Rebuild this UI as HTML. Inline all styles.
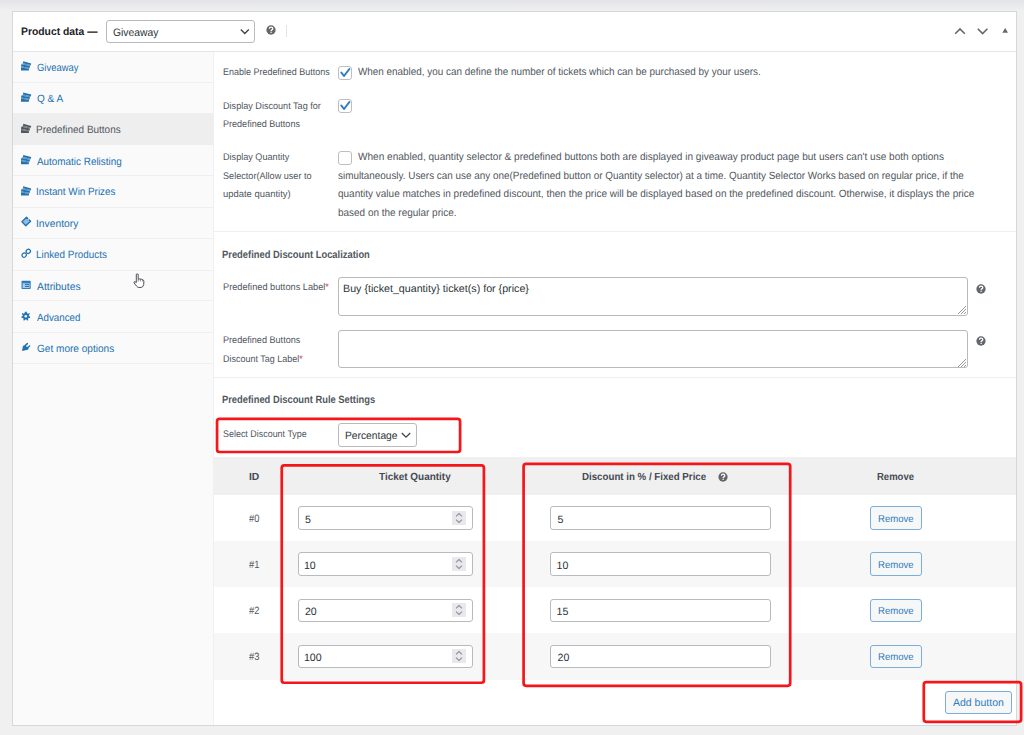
<!DOCTYPE html>
<html><head><meta charset="utf-8">
<style>
*{box-sizing:border-box;margin:0;padding:0}
html,body{width:1024px;height:735px;overflow:hidden;background:#f0f0f1;font-family:"Liberation Sans",sans-serif}
.a{position:absolute}
.t{position:absolute;white-space:nowrap;line-height:normal;transform-origin:0 0;text-rendering:geometricPrecision;font-family:"Liberation Sans",sans-serif}
.topgrad{left:0;top:0;width:1024px;height:11px;background:linear-gradient(#e3e4e6,#f0f0f1)}
.panel{left:12px;top:11px;width:1005px;height:715px;background:#fff;border:1px solid #d6d7d9}
.hsep{left:13px;top:51px;width:1003px;height:1px;background:#e6e6e6}
.sidebar{left:13px;top:52px;width:200px;height:673px;background:#fafafa}
.sbline{left:213px;top:52px;width:1px;height:673px;background:#f0f0f0}
.ssep{left:13px;width:200px;height:1px;background:#efefef}
.sactive{left:13px;top:113px;width:200px;height:32px;background:#eeeeee}
.box{border:1px solid #b8babd;border-radius:3px;background:#fff}
.cb{width:14px;height:14px;border:1px solid #bcbec1;border-radius:3px;background:#fff}
.btn{border:1px solid #7cadd9;border-radius:3px;background:#f6f7f7}
.csep{left:214px;width:802px;height:1px;background:#efefef}
.help{width:9.4px;height:9.4px;border-radius:50%;background:#63676c;color:#fff;font-weight:700;font-size:7.5px;line-height:9.4px;text-align:center}
</style></head><body>
<div class="a topgrad"></div>
<div class="a panel"></div>
<div class="a hsep"></div>
<!-- header select -->
<div class="a box" style="left:106px;top:20px;width:149px;height:23px"></div>
<svg class="a" style="left:239px;top:27px" width="12" height="9" viewBox="0 0 12 9"><path d="M1.8 2.6 L5.8 6.6 L9.8 2.6" fill="none" stroke="#3c434a" stroke-width="1.35"/></svg>
<svg class="a" style="left:264.70px;top:24.40px" width="12" height="12" viewBox="-6 -6 12 12"><circle r="4.65" fill="#63676c"/><path d="M-1.6 -1.3 Q-1.6 -3.0 0.1 -3.0 Q1.8 -3.0 1.8 -1.5 Q1.8 -0.6 0.8 -0.1 Q0.1 0.3 0.1 1.1" fill="none" stroke="#fff" stroke-width="1.25"/><circle cx="0.1" cy="2.35" r="0.75" fill="#fff"/></svg>
<div class="a" style="left:286px;top:25px;width:1px;height:12px;background:#e4e4e4"></div>
<!-- right header icons -->
<svg class="a" style="left:950px;top:24px" width="70" height="14" viewBox="0 0 70 14">
<path d="M5.2 9.8 L10 5 L14.8 9.8" fill="none" stroke="#646970" stroke-width="1.6"/>
<path d="M27.8 4.8 L32.6 9.6 L37.4 4.8" fill="none" stroke="#646970" stroke-width="1.6"/>
<path d="M52.3 8.7 L55.2 4 L58 8.7 Z" fill="#646970"/>
</svg>
<!-- sidebar -->
<div class="a sidebar"></div>
<div class="a sbline"></div>
<div class="a sactive"></div>
<div class="a ssep" style="top:82px"></div>
<div class="a ssep" style="top:175px"></div>
<div class="a ssep" style="top:207px"></div>
<div class="a ssep" style="top:238px"></div>
<div class="a ssep" style="top:270px"></div>
<div class="a ssep" style="top:300px"></div>
<div class="a ssep" style="top:332px"></div>
<div class="a ssep" style="top:363px"></div>
<svg class="a" style="left:0;top:0" width="214" height="370" viewBox="0 0 214 370">

<g fill="#2271b1">
 <g transform="translate(0 0)">
 <path d="M23.2 61.3 L31.2 63.4 L30.9 65.0 L23.0 63.3 Z"/>
 <path d="M21.4 64.2 L29.9 66.0 L29.6 67.9 L21.0 66.3 Z"/>
 <path d="M21.0 67.4 L29.0 68.7 L28.8 70.6 L21.0 70.6 Z"/>
 <path d="M23.0 63.3 L30.9 65.0 L29.9 66.0 L21.4 64.2 Z" opacity="0.75"/>
 <path d="M21.0 66.3 L29.6 67.9 L29.0 68.7 L21.0 67.4 Z" opacity="0.75"/>
</g>
 <g transform="translate(0 31.2)">
 <path d="M23.2 61.3 L31.2 63.4 L30.9 65.0 L23.0 63.3 Z"/>
 <path d="M21.4 64.2 L29.9 66.0 L29.6 67.9 L21.0 66.3 Z"/>
 <path d="M21.0 67.4 L29.0 68.7 L28.8 70.6 L21.0 70.6 Z"/>
 <path d="M23.0 63.3 L30.9 65.0 L29.9 66.0 L21.4 64.2 Z" opacity="0.75"/>
 <path d="M21.0 66.3 L29.6 67.9 L29.0 68.7 L21.0 67.4 Z" opacity="0.75"/>
</g>
 <g transform="translate(0 62.5)" fill="#50575e">
 <path d="M23.2 61.3 L31.2 63.4 L30.9 65.0 L23.0 63.3 Z"/>
 <path d="M21.4 64.2 L29.9 66.0 L29.6 67.9 L21.0 66.3 Z"/>
 <path d="M21.0 67.4 L29.0 68.7 L28.8 70.6 L21.0 70.6 Z"/>
 <path d="M23.0 63.3 L30.9 65.0 L29.9 66.0 L21.4 64.2 Z" opacity="0.75"/>
 <path d="M21.0 66.3 L29.6 67.9 L29.0 68.7 L21.0 67.4 Z" opacity="0.75"/>
</g>
 <g transform="translate(0 93.7)">
 <path d="M23.2 61.3 L31.2 63.4 L30.9 65.0 L23.0 63.3 Z"/>
 <path d="M21.4 64.2 L29.9 66.0 L29.6 67.9 L21.0 66.3 Z"/>
 <path d="M21.0 67.4 L29.0 68.7 L28.8 70.6 L21.0 70.6 Z"/>
 <path d="M23.0 63.3 L30.9 65.0 L29.9 66.0 L21.4 64.2 Z" opacity="0.75"/>
 <path d="M21.0 66.3 L29.6 67.9 L29.0 68.7 L21.0 67.4 Z" opacity="0.75"/>
</g>
 <g transform="translate(0 125)">
 <path d="M23.2 61.3 L31.2 63.4 L30.9 65.0 L23.0 63.3 Z"/>
 <path d="M21.4 64.2 L29.9 66.0 L29.6 67.9 L21.0 66.3 Z"/>
 <path d="M21.0 67.4 L29.0 68.7 L28.8 70.6 L21.0 70.6 Z"/>
 <path d="M23.0 63.3 L30.9 65.0 L29.9 66.0 L21.4 64.2 Z" opacity="0.75"/>
 <path d="M21.0 66.3 L29.6 67.9 L29.0 68.7 L21.0 67.4 Z" opacity="0.75"/>
</g>
</g>
<!-- inventory tag -->
<path d="M26.5 217.3 L30.6 221.3 L25.8 225.7 L21.9 221.8 Z" fill="#8dbbe3" stroke="#2271b1" stroke-width="1.3" stroke-linejoin="round"/>
<circle cx="28.6" cy="219.0" r="0.7" fill="#fff"/>
<!-- linked products -->
<g fill="none" stroke="#2271b1" stroke-width="1.2">
 <ellipse cx="24.2" cy="255.1" rx="2.2" ry="2.0" transform="rotate(-40 24.2 255.1)"/>
 <ellipse cx="28.3" cy="251.3" rx="2.2" ry="2.0" transform="rotate(-40 28.3 251.3)"/>
</g>
<!-- attributes -->
<rect x="21.5" y="280.8" width="9.2" height="8.2" rx="0.8" fill="#2f7bc0"/>
<rect x="22.6" y="283.2" width="7" height="4.8" fill="#a9cbea"/>
<rect x="25" y="283.9" width="4" height="1.0" fill="#2271b1"/>
<rect x="25" y="285.9" width="4" height="1.0" fill="#2271b1"/>
<!-- gear -->
<g transform="translate(25.8 316.2)" fill="#2271b1">
 <path d="M-0.9 -4.4 L0.9 -4.4 L1.2 -2.9 L2.3 -2.4 L3.4 -3.3 L4.1 -2.3 L3.0 -1.1 L3.3 0.0 L4.5 0.6 L4.1 1.9 L2.8 1.7 L2.1 2.7 L2.6 4.0 L1.3 4.4 L0.6 3.2 L-0.6 3.2 L-1.3 4.4 L-2.6 4.0 L-2.1 2.7 L-2.8 1.7 L-4.1 1.9 L-4.5 0.6 L-3.3 0.0 L-3.0 -1.1 L-4.1 -2.3 L-3.4 -3.3 L-2.3 -2.4 L-1.2 -2.9 Z"/>
 <circle r="1.3" fill="#fafafa"/>
</g>
<!-- get more options plug -->
<path d="M22.0 350.9 L22.9 346.4 Q23.6 344.9 25.0 345.2 L28.3 348.2 Q29.0 349.4 27.6 349.8 Z" fill="#2271b1"/>
<path d="M25.4 345.4 L27.3 343.6 M27.6 347.6 L29.6 346.0" stroke="#2271b1" stroke-width="1.5" stroke-linecap="round"/>
</svg>

<!-- content separators -->
<div class="a csep" style="top:231px"></div>
<div class="a csep" style="top:377px"></div>
<!-- checkboxes -->
<div class="a cb" style="left:338px;top:66px"></div>
<svg class="a" style="left:338px;top:66px" width="14" height="14" viewBox="0 0 14 14"><path d="M3.3 6.5 L6 10 L11.4 3" fill="none" stroke="#2f7cc1" stroke-width="2" stroke-linecap="round" stroke-linejoin="round"/></svg>
<div class="a cb" style="left:338px;top:99px"></div>
<svg class="a" style="left:338px;top:99px" width="14" height="14" viewBox="0 0 14 14"><path d="M3.3 6.5 L6 10 L11.4 3" fill="none" stroke="#2f7cc1" stroke-width="2" stroke-linecap="round" stroke-linejoin="round"/></svg>
<div class="a cb" style="left:338px;top:151px"></div>
<!-- textareas -->
<div class="a box" style="left:338px;top:277px;width:630px;height:39px"></div>
<svg class="a" style="left:955px;top:303px" width="12" height="12" viewBox="0 0 12 12"><path d="M11 3 L3 11 M11 6 L6 11 M11 9 L9 11" stroke="#8c8f94" stroke-width="0.9"/></svg>
<div class="a box" style="left:338px;top:330px;width:630px;height:38px"></div>
<svg class="a" style="left:955px;top:356px" width="12" height="12" viewBox="0 0 12 12"><path d="M11 3 L3 11 M11 6 L6 11 M11 9 L9 11" stroke="#8c8f94" stroke-width="0.9"/></svg>
<svg class="a" style="left:974.70px;top:282.70px" width="12" height="12" viewBox="-6 -6 12 12"><circle r="4.65" fill="#63676c"/><path d="M-1.6 -1.3 Q-1.6 -3.0 0.1 -3.0 Q1.8 -3.0 1.8 -1.5 Q1.8 -0.6 0.8 -0.1 Q0.1 0.3 0.1 1.1" fill="none" stroke="#fff" stroke-width="1.25"/><circle cx="0.1" cy="2.35" r="0.75" fill="#fff"/></svg>
<svg class="a" style="left:974.70px;top:335.30px" width="12" height="12" viewBox="-6 -6 12 12"><circle r="4.65" fill="#63676c"/><path d="M-1.6 -1.3 Q-1.6 -3.0 0.1 -3.0 Q1.8 -3.0 1.8 -1.5 Q1.8 -0.6 0.8 -0.1 Q0.1 0.3 0.1 1.1" fill="none" stroke="#fff" stroke-width="1.25"/><circle cx="0.1" cy="2.35" r="0.75" fill="#fff"/></svg>
<!-- discount type select -->
<div class="a box" style="left:338px;top:423px;width:79px;height:24px"></div>
<svg class="a" style="left:400px;top:430px" width="12" height="10" viewBox="0 0 12 10"><path d="M1.8 3 L6 7.2 L10.2 3" fill="none" stroke="#3c434a" stroke-width="1.25"/></svg>
<!-- table -->
<div class="a" style="left:214px;top:457px;width:802px;height:38px;background:#f0f0f0"></div>
<div class="a" style="left:214px;top:541px;width:802px;height:46px;background:#f7f7f7"></div>
<div class="a" style="left:214px;top:633px;width:802px;height:47px;background:#f7f7f7"></div>
<svg class="a" style="left:716.80px;top:470.90px" width="12" height="12" viewBox="-6 -6 12 12"><circle r="4.65" fill="#63676c"/><path d="M-1.6 -1.3 Q-1.6 -3.0 0.1 -3.0 Q1.8 -3.0 1.8 -1.5 Q1.8 -0.6 0.8 -0.1 Q0.1 0.3 0.1 1.1" fill="none" stroke="#fff" stroke-width="1.25"/><circle cx="0.1" cy="2.35" r="0.75" fill="#fff"/></svg>
<div class="a box" style="left:298.2px;top:506.3px;width:174.6px;height:23.4px"></div>
<div class="a" style="left:452px;top:511.0px;width:14px;height:14px;background:#e9e9ed"></div>
<svg class="a" style="left:452px;top:511.0px" width="14" height="14" viewBox="0 0 14 14"><path d="M4 5.3 L7 2.6 L10 5.3 M4 8.7 L7 11.4 L10 8.7" fill="none" stroke="#8c8f94" stroke-width="1.1"/></svg>
<div class="a box" style="left:549.8px;top:506.3px;width:221.6px;height:23.4px"></div>
<div class="a btn" style="left:869.8px;top:506.3px;width:52.2px;height:23.4px"></div>
<div class="a box" style="left:298.2px;top:552.4px;width:174.6px;height:23.4px"></div>
<div class="a" style="left:452px;top:557.1px;width:14px;height:14px;background:#e9e9ed"></div>
<svg class="a" style="left:452px;top:557.1px" width="14" height="14" viewBox="0 0 14 14"><path d="M4 5.3 L7 2.6 L10 5.3 M4 8.7 L7 11.4 L10 8.7" fill="none" stroke="#8c8f94" stroke-width="1.1"/></svg>
<div class="a box" style="left:549.8px;top:552.4px;width:221.6px;height:23.4px"></div>
<div class="a btn" style="left:869.8px;top:552.4px;width:52.2px;height:23.4px"></div>
<div class="a box" style="left:298.2px;top:598.5px;width:174.6px;height:23.4px"></div>
<div class="a" style="left:452px;top:603.2px;width:14px;height:14px;background:#e9e9ed"></div>
<svg class="a" style="left:452px;top:603.2px" width="14" height="14" viewBox="0 0 14 14"><path d="M4 5.3 L7 2.6 L10 5.3 M4 8.7 L7 11.4 L10 8.7" fill="none" stroke="#8c8f94" stroke-width="1.1"/></svg>
<div class="a box" style="left:549.8px;top:598.5px;width:221.6px;height:23.4px"></div>
<div class="a btn" style="left:869.8px;top:598.5px;width:52.2px;height:23.4px"></div>
<div class="a box" style="left:298.2px;top:644.6px;width:174.6px;height:23.4px"></div>
<div class="a" style="left:452px;top:649.3px;width:14px;height:14px;background:#e9e9ed"></div>
<svg class="a" style="left:452px;top:649.3px" width="14" height="14" viewBox="0 0 14 14"><path d="M4 5.3 L7 2.6 L10 5.3 M4 8.7 L7 11.4 L10 8.7" fill="none" stroke="#8c8f94" stroke-width="1.1"/></svg>
<div class="a box" style="left:549.8px;top:644.6px;width:221.6px;height:23.4px"></div>
<div class="a btn" style="left:869.8px;top:644.6px;width:52.2px;height:23.4px"></div>
<div class="a btn" style="left:944.6px;top:691px;width:67.2px;height:22.6px"></div>
<svg class="a" style="left:0;top:0" width="1024" height="735" viewBox="0 0 1024 735"><g fill="none" stroke="#f3161a" stroke-width="2.7">
<rect x="217.05" y="418.9" width="243.05" height="33.1" rx="2.5"/>
<rect x="281.75" y="465.35" width="202.15" height="217.4" rx="2.5"/>
<rect x="523.6" y="463.8" width="266.6" height="222" rx="2.5"/>
<rect x="923.8" y="682.1" width="97.3" height="39.7" rx="2.5"/>
</g></svg>
<svg class="a" style="left:132.6px;top:272.7px" width="14" height="16" viewBox="0 0 14 16">
<path d="M3.3 1.2 Q4.4 0.6 5.2 1.3 L5.2 6.2 L6.2 5.8 L7.4 6.0 L8.4 6.3 L9.6 6.6 Q10.8 7.0 10.9 8.4 L10.7 11.6 Q10.2 14.0 8.4 14.4 L5.8 14.5 Q4.5 14.3 3.8 13.4 L1.0 9.8 Q0.8 8.7 1.8 8.6 L3.3 9.6 Z" fill="#fff" stroke="#3c3c44" stroke-width="0.9" stroke-linejoin="round"/>
<path d="M5.2 6.2 L5.2 8.6 M7.4 6.0 L7.4 8.4 M9.6 6.6 L9.6 8.6" stroke="#3c3c44" stroke-width="0.6"/>
</svg>

<div class="t" style="left:21.30px;top:25.80px;font-size:10.8px;font-weight:700;color:#1d2327;transform:scaleX(0.9587)">Product data —</div>
<div class="t" style="left:112.80px;top:26.60px;font-size:10.8px;font-weight:400;color:#2c3338;transform:scaleX(0.9583)">Giveaway</div>
<div class="t" style="left:36.90px;top:61.70px;font-size:10.5px;font-weight:400;color:#2271b1;transform:scaleX(0.8978)">Giveaway</div>
<div class="t" style="left:36.90px;top:92.60px;font-size:10.5px;font-weight:400;color:#2271b1;transform:scaleX(0.9571)">Q &amp; A</div>
<div class="t" style="left:35.95px;top:124.20px;font-size:10.5px;font-weight:400;color:#50575e;transform:scaleX(0.9477)">Predefined Buttons</div>
<div class="t" style="left:36.90px;top:155.60px;font-size:10.5px;font-weight:400;color:#2271b1;transform:scaleX(0.9422)">Automatic Relisting</div>
<div class="t" style="left:35.96px;top:186.40px;font-size:10.5px;font-weight:400;color:#2271b1;transform:scaleX(0.9386)">Instant Win Prizes</div>
<div class="t" style="left:35.92px;top:217.80px;font-size:10.5px;font-weight:400;color:#2271b1;transform:scaleX(0.9786)">Inventory</div>
<div class="t" style="left:35.96px;top:248.70px;font-size:10.5px;font-weight:400;color:#2271b1;transform:scaleX(0.9405)">Linked Products</div>
<div class="t" style="left:36.90px;top:280.50px;font-size:10.5px;font-weight:400;color:#2271b1;transform:scaleX(0.9841)">Attributes</div>
<div class="t" style="left:36.90px;top:311.70px;font-size:10.5px;font-weight:400;color:#2271b1;transform:scaleX(0.9304)">Advanced</div>
<div class="t" style="left:36.90px;top:343.20px;font-size:10.5px;font-weight:400;color:#2271b1;transform:scaleX(0.9587)">Get more options</div>
<div class="t" style="left:222.90px;top:66.90px;font-size:9.6px;font-weight:400;color:#50575e;transform:scaleX(0.9351)">Enable Predefined Buttons</div>
<div class="t" style="left:222.90px;top:100.80px;font-size:9.6px;font-weight:400;color:#50575e;transform:scaleX(0.9476)">Display Discount Tag for</div>
<div class="t" style="left:222.90px;top:118.60px;font-size:9.6px;font-weight:400;color:#50575e;transform:scaleX(0.9427)">Predefined Buttons</div>
<div class="t" style="left:222.90px;top:152.00px;font-size:9.6px;font-weight:400;color:#50575e;transform:scaleX(0.9486)">Display Quantity</div>
<div class="t" style="left:222.90px;top:170.50px;font-size:9.6px;font-weight:400;color:#50575e;transform:scaleX(0.9495)">Selector(Allow user to</div>
<div class="t" style="left:222.90px;top:188.80px;font-size:9.6px;font-weight:400;color:#50575e;transform:scaleX(0.9838)">update quantity)</div>
<div class="t" style="left:357.80px;top:66.20px;font-size:10.5px;font-weight:400;color:#50575e;transform:scaleX(0.9426)">When enabled, you can define the number of tickets which can be purchased by your users.</div>
<div class="t" style="left:357.80px;top:151.00px;font-size:10.5px;font-weight:400;color:#50575e;transform:scaleX(0.9583)">When enabled, quantity selector &amp; predefined buttons both are displayed in giveaway product page but users can't use both options</div>
<div class="t" style="left:338.40px;top:169.90px;font-size:10.5px;font-weight:400;color:#50575e;transform:scaleX(0.9428)">simultaneously. Users can use any one(Predefined button or Quantity selector) at a time. Quantity Selector Works based on regular price, if the</div>
<div class="t" style="left:338.40px;top:188.40px;font-size:10.5px;font-weight:400;color:#50575e;transform:scaleX(0.9521)">quantity value matches in predefined discount, then the price will be displayed based on the predefined discount. Otherwise, it displays the price</div>
<div class="t" style="left:338.40px;top:207.40px;font-size:10.5px;font-weight:400;color:#50575e;transform:scaleX(0.9484)">based on the regular price.</div>
<div class="t" style="left:222.00px;top:248.60px;font-size:10.6px;font-weight:700;color:#50575e;transform:scaleX(0.8844)">Predefined Discount Localization</div>
<div class="t" style="left:223.40px;top:282.40px;font-size:9.6px;font-weight:400;color:#50575e;transform:scaleX(0.9591)">Predefined buttons Label<span style="color:#d63638">*</span></div>
<div class="t" style="left:343.19px;top:283.10px;font-size:10.6px;font-weight:400;color:#2c3338;transform:scaleX(1.0087)">Buy {ticket_quantity} ticket(s) for {price}</div>
<div class="t" style="left:223.40px;top:334.60px;font-size:9.6px;font-weight:400;color:#50575e;transform:scaleX(0.9476)">Predefined Buttons</div>
<div class="t" style="left:223.40px;top:353.60px;font-size:9.6px;font-weight:400;color:#50575e;transform:scaleX(0.9353)">Discount Tag Label<span style="color:#d63638">*</span></div>
<div class="t" style="left:222.00px;top:393.70px;font-size:10.6px;font-weight:700;color:#50575e;transform:scaleX(0.8822)">Predefined Discount Rule Settings</div>
<div class="t" style="left:223.20px;top:429.00px;font-size:9.6px;font-weight:400;color:#50575e;transform:scaleX(0.9311)">Select Discount Type</div>
<div class="t" style="left:344.93px;top:430.10px;font-size:10.6px;font-weight:400;color:#2c3338;transform:scaleX(0.9698)">Percentage</div>
<div class="t" style="left:248.90px;top:471.80px;font-size:10.3px;font-weight:700;color:#454a50">ID</div>
<div class="t" style="left:378.60px;top:471.90px;font-size:10.3px;font-weight:700;color:#454a50;transform:scaleX(0.9662)">Ticket Quantity</div>
<div class="t" style="left:582.00px;top:472.10px;font-size:10.3px;font-weight:700;color:#454a50;transform:scaleX(0.9432)">Discount in % / Fixed Price</div>
<div class="t" style="left:877.40px;top:471.90px;font-size:10.3px;font-weight:700;color:#454a50;transform:scaleX(0.9225)">Remove</div>
<div class="t" style="left:248.60px;top:512.70px;font-size:10.6px;font-weight:400;color:#50575e;transform:scaleX(0.8833)">#0</div>
<div class="t" style="left:304.90px;top:513.70px;font-size:10.6px;font-weight:400;color:#2c3338">5</div>
<div class="t" style="left:557.50px;top:513.70px;font-size:10.6px;font-weight:400;color:#2c3338">5</div>
<div class="t" style="left:877.84px;top:514.00px;font-size:10px;font-weight:400;color:#2f7bbf;transform:scaleX(0.9583)">Remove</div>
<div class="t" style="left:248.60px;top:558.75px;font-size:10.6px;font-weight:400;color:#50575e;transform:scaleX(0.8833)">#1</div>
<div class="t" style="left:303.90px;top:559.75px;font-size:10.6px;font-weight:400;color:#2c3338">10</div>
<div class="t" style="left:556.50px;top:559.75px;font-size:10.6px;font-weight:400;color:#2c3338">10</div>
<div class="t" style="left:877.84px;top:560.05px;font-size:10px;font-weight:400;color:#2f7bbf;transform:scaleX(0.9583)">Remove</div>
<div class="t" style="left:248.60px;top:604.80px;font-size:10.6px;font-weight:400;color:#50575e;transform:scaleX(0.8833)">#2</div>
<div class="t" style="left:304.90px;top:605.80px;font-size:10.6px;font-weight:400;color:#2c3338">20</div>
<div class="t" style="left:556.50px;top:605.80px;font-size:10.6px;font-weight:400;color:#2c3338">15</div>
<div class="t" style="left:877.84px;top:606.10px;font-size:10px;font-weight:400;color:#2f7bbf;transform:scaleX(0.9583)">Remove</div>
<div class="t" style="left:248.60px;top:650.85px;font-size:10.6px;font-weight:400;color:#50575e;transform:scaleX(0.8833)">#3</div>
<div class="t" style="left:303.90px;top:651.85px;font-size:10.6px;font-weight:400;color:#2c3338">100</div>
<div class="t" style="left:557.50px;top:651.85px;font-size:10.6px;font-weight:400;color:#2c3338">20</div>
<div class="t" style="left:877.84px;top:652.15px;font-size:10px;font-weight:400;color:#2f7bbf;transform:scaleX(0.9583)">Remove</div>
<div class="t" style="left:953.40px;top:697.30px;font-size:10.6px;font-weight:400;color:#2f7bbf;transform:scaleX(0.9922)">Add button</div>
</body></html>
